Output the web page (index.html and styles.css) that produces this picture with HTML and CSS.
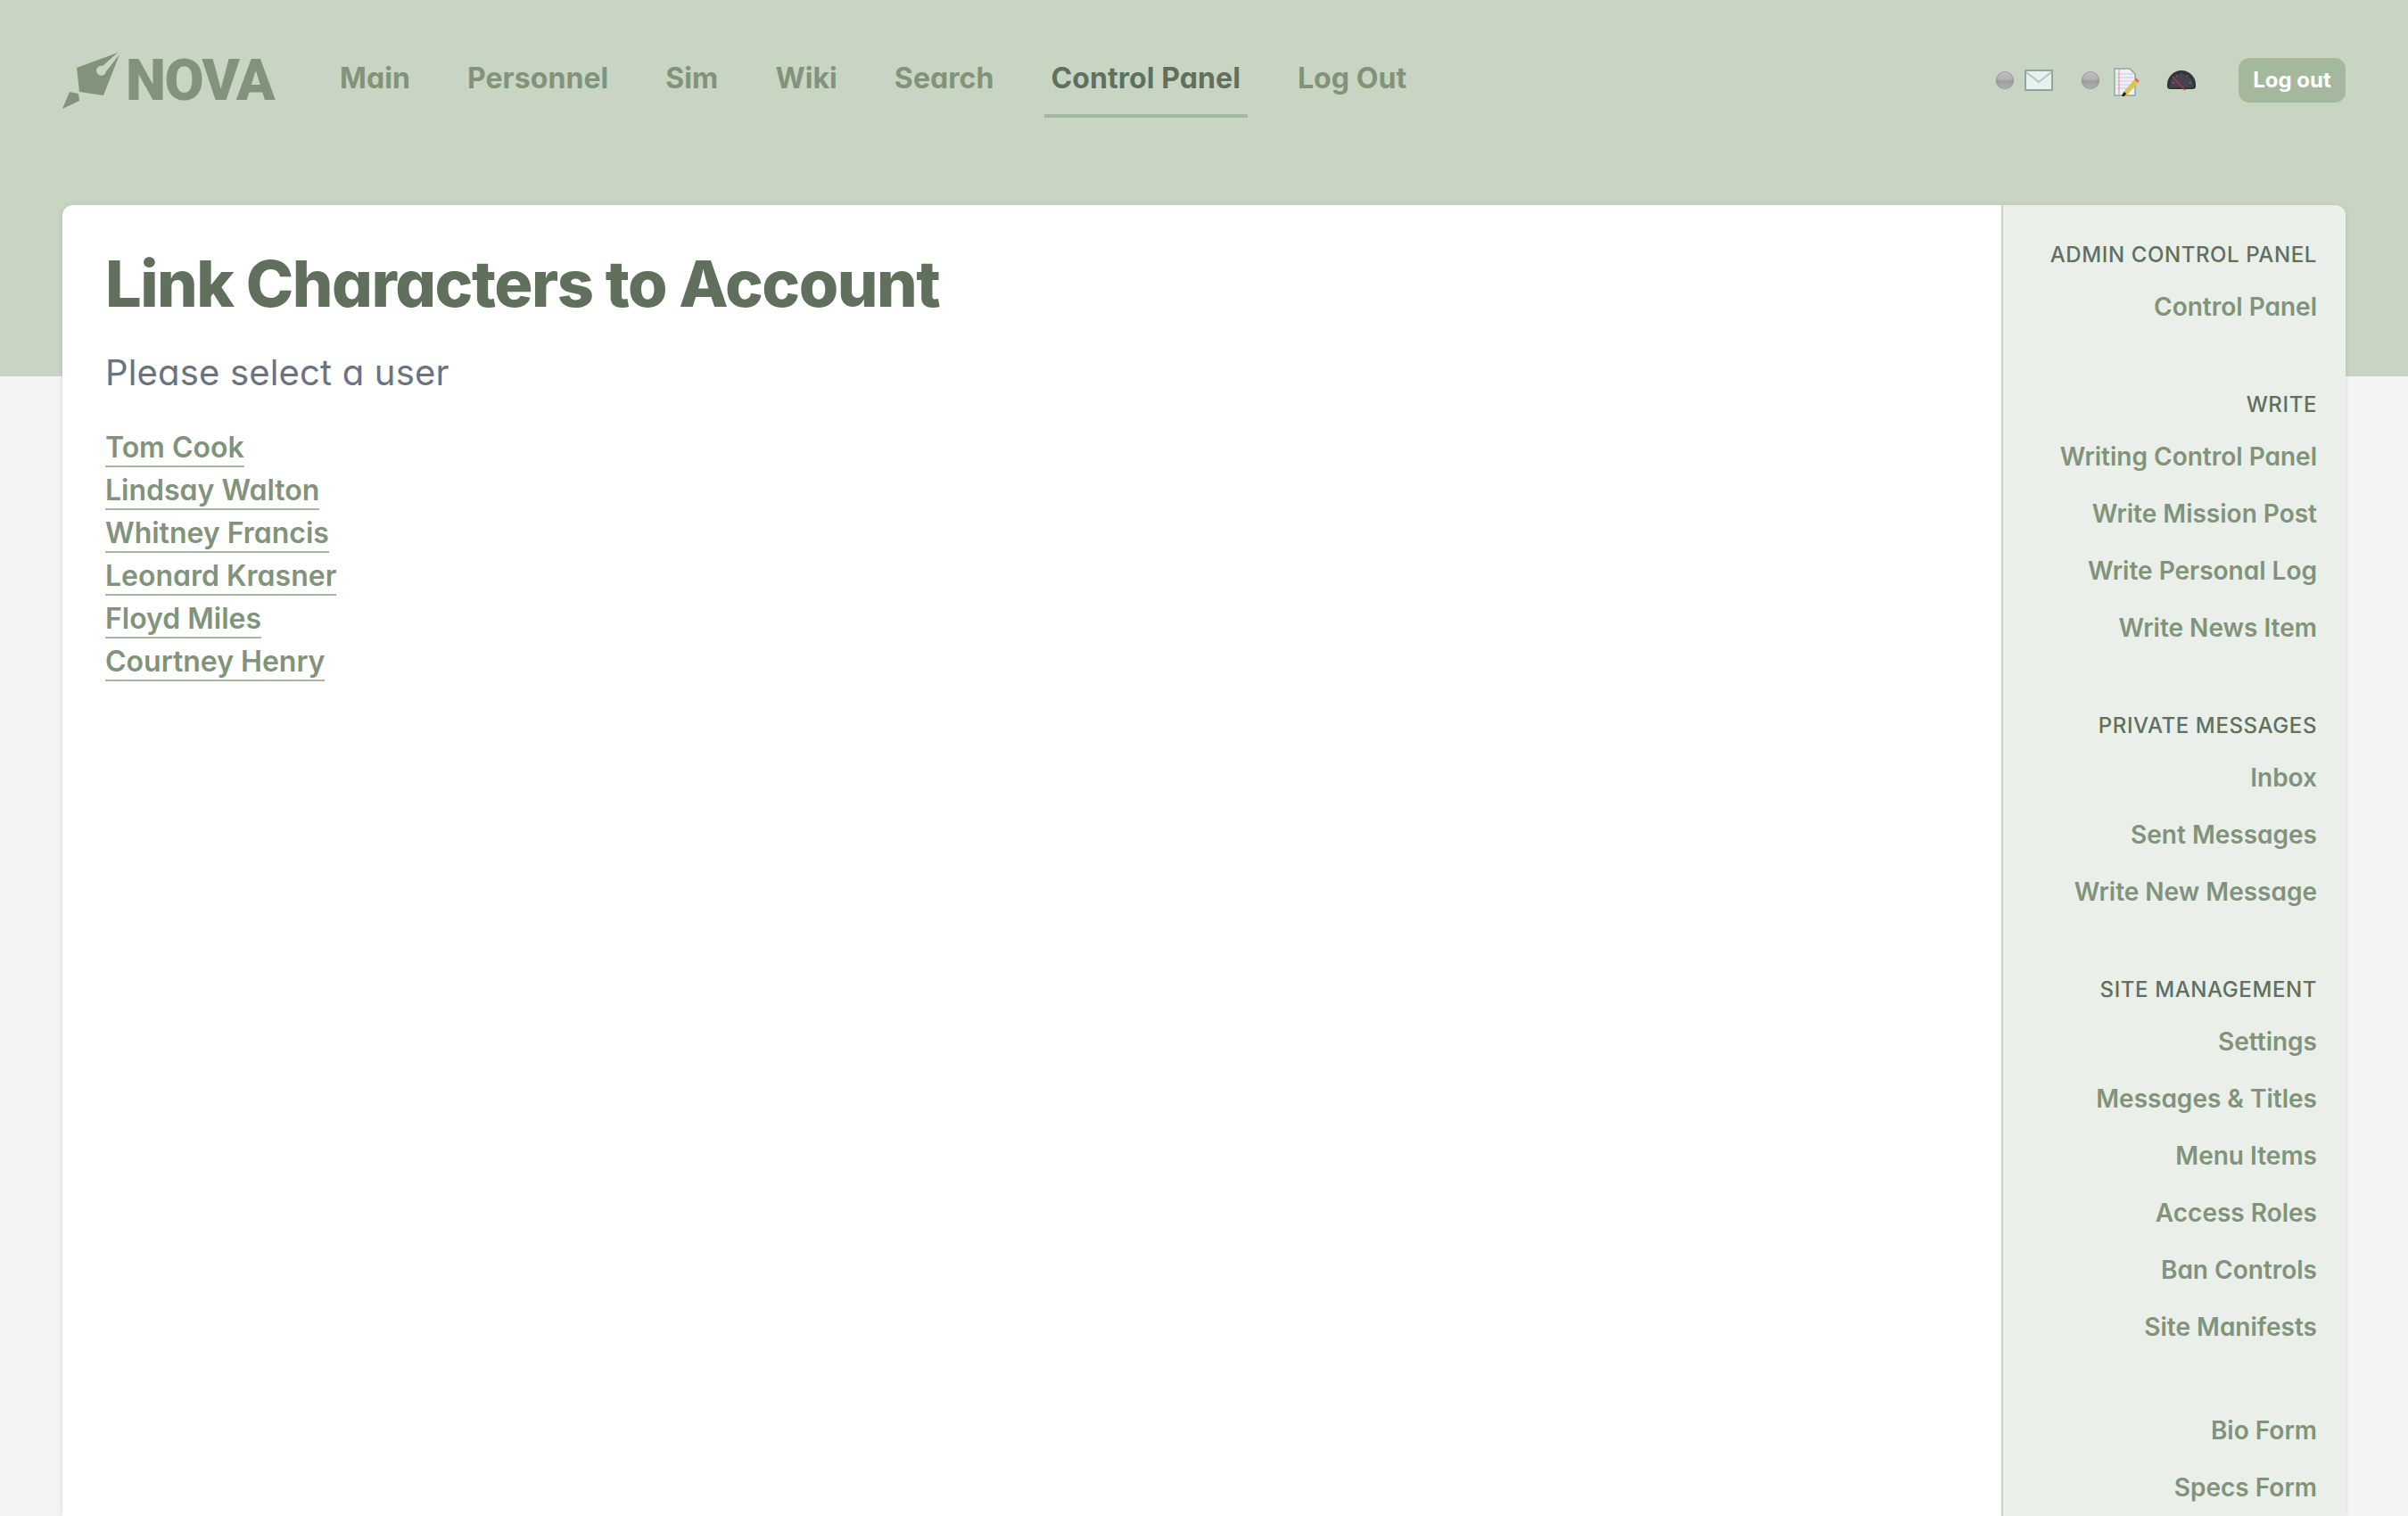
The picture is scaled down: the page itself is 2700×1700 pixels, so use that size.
FILE: index.html
```html
<!DOCTYPE html>
<html lang="en">
<head>
<meta charset="utf-8">
<title>Link Characters to Account</title>
<link rel="stylesheet" href="styles.css">
</head>
<body>
<div class="band"></div>
<div class="page">
  <header class="topbar">
    <a class="logo" href="#">
      <svg class="logo-mark" viewBox="0 0 64 64" width="64" height="64" aria-hidden="true">
        <path fill="#81937a" d="M16 18 62 1 45 16A5.5 5.5 0 1 0 49 22L64 3 46 49 19 45ZM8 45 18 47 19 55 0 64Z"/>
      </svg>
      <span class="logo-word">NOVA</span>
    </a>
    <nav class="nav">
      <a href="#">Main</a>
      <a href="#">Personnel</a>
      <a href="#">Sim</a>
      <a href="#">Wiki</a>
      <a href="#">Search</a>
      <a href="#" class="active">Control Panel</a>
      <a href="#">Log Out</a>
    </nav>
    <div class="tools">
      <span class="dot"></span>
      <svg class="ico-mail" width="32" height="24" viewBox="0 0 32 24" aria-hidden="true">
        <rect x="1" y="1" width="30" height="22" fill="#e6f2ef" stroke="#8fa89e" stroke-width="2"/>
        <path d="M2 3 16 14 30 3" fill="none" stroke="#b4c5bf" stroke-width="2"/>
      </svg>
      <span class="dot dot-second"></span>
      <svg class="ico-note" width="32" height="32" viewBox="0 0 32 32" aria-hidden="true">
        <path d="M3 1H20L26 7V31H3Z" fill="#eef1f7" stroke="#8fa89e" stroke-width="1.5"/>
        <path d="M5 7H24M5 11H24M5 15H24M5 19H24M5 23H24" stroke="#c3cbe6" stroke-width="1"/>
        <path d="M8 2V30" stroke="#eba9a0" stroke-width="1.5"/>
        <path d="M14 30 28 14" stroke="#e2c24a" stroke-width="5"/>
        <path d="M27 15 29 13" stroke="#e0695a" stroke-width="5"/>
        <path d="M12 32 15 28" stroke="#222" stroke-width="3"/>
      </svg>
      <svg class="ico-gauge" width="32" height="24" viewBox="0 0 32 24" aria-hidden="true">
        <path d="M0 17A16 16 0 0 1 32 17V19Q32 22 28 22H4Q0 22 0 19Z" fill="#33333a"/>
        <path d="M3 18A13 13 0 0 1 29 18V20H3Z" fill="#45434f"/>
        <path d="M6 15H8M10 7H11M16 4V5M22 7H23M25 15H27" stroke="#74747c" stroke-width="1.5"/>
        <path d="M6 8 20 23" stroke="#a83c3b" stroke-width="1.5"/>
      </svg>
      <a href="#" class="logout">Log out</a>
    </div>
  </header>
  <main class="card">
    <section class="content">
      <h1>Link Characters to Account</h1>
      <p class="lead">Please select a user</p>
      <ul class="users">
        <li><a href="#">Tom Cook</a></li>
        <li><a href="#">Lindsay Walton</a></li>
        <li><a href="#">Whitney Francis</a></li>
        <li><a href="#">Leonard Krasner</a></li>
        <li><a href="#">Floyd Miles</a></li>
        <li><a href="#">Courtney Henry</a></li>
      </ul>
    </section>
    <aside class="side">
      <div class="group">
        <h2>Admin Control Panel</h2>
        <a href="#">Control Panel</a>
      </div>
      <div class="group">
        <h2>Write</h2>
        <a href="#">Writing Control Panel</a>
        <a href="#">Write Mission Post</a>
        <a href="#">Write Personal Log</a>
        <a href="#">Write News Item</a>
      </div>
      <div class="group">
        <h2>Private Messages</h2>
        <a href="#">Inbox</a>
        <a href="#">Sent Messages</a>
        <a href="#">Write New Message</a>
      </div>
      <div class="group">
        <h2>Site Management</h2>
        <a href="#">Settings</a>
        <a href="#">Messages &amp; Titles</a>
        <a href="#">Menu Items</a>
        <a href="#">Access Roles</a>
        <a href="#">Ban Controls</a>
        <a href="#">Site Manifests</a>
      </div>
      <div class="group group-plain">
        <a href="#">Bio Form</a>
        <a href="#">Specs Form</a>
      </div>
    </aside>
  </main>
</div>
</body>
</html>
```
FILE: styles.css
```css
* { box-sizing: border-box; }
html, body { margin: 0; height: 1700px; overflow: hidden; }
body { background: #f3f4f6; font-family: Inter, "Liberation Sans", sans-serif; font-feature-settings: "cv11"; position: relative; }
a { text-decoration: none; color: inherit; }
.band { position: absolute; top: 0; left: 0; right: 0; height: 422px; background: #c9d5c3; }
.page { position: relative; padding: 0 70px; height: 1700px; display: flex; flex-direction: column; }
.topbar { height: 230px; display: flex; align-items: flex-start; }
.logo { display: flex; align-items: flex-start; width: 311px; padding-top: 58px; flex: none; }
.logo-mark { flex: none; }
.logo-word { font-family: Roboto, sans-serif; font-weight: 900; font-size: 64px; line-height: 64px; color: #81937a; margin: 1px 0 0 7px; letter-spacing: -1.5px; }
.nav { display: flex; gap: 64px; padding-top: 64px; }
.nav a { font-size: 32px; line-height: 48px; font-weight: 700; letter-spacing: .08px; color: #81937a; padding: 0 8px 16px; border-bottom: 4px solid transparent; margin: 0 -8px; }
.nav a.active { color: #60705c; border-bottom-color: #a3b89d; }
.tools { margin-left: auto; display: flex; align-items: center; height: 50px; margin-top: 65px; }
.dot { width: 20px; height: 20px; border-radius: 50%; background: linear-gradient(#c2c2c2, #b2b2b2 45%, #9c9c9c 55%, #b6b6b6); box-shadow: inset 0 0 2px #707070; flex: none; }
.dot-second { margin-left: 32px; }
.ico-mail { margin-left: 12px; }
.ico-note { margin-left: 14px; margin-top: 4px; }
.ico-gauge { margin-left: 30px; }
.logout { margin-left: 48px; width: 120px; text-align: center; background: #a3b89d; color: #fff; font-size: 24px; font-weight: 700; line-height: 50px; height: 50px; border-radius: 12px; }
.card { flex: 1; display: flex; background: #fff; border-radius: 12px 12px 0 0; box-shadow: 0 1px 6px rgba(60, 70, 60, .14); overflow: hidden; min-height: 0; }
.content { flex: 1; padding: 48px; }
h1 { margin: 0; font-size: 72px; line-height: 80px; font-weight: 800; letter-spacing: -1.5px; color: #60705c; }
.lead { margin: 30px 0 0; font-size: 40px; line-height: 60px; letter-spacing: .17px; color: #6b7280; }
.users { list-style: none; margin: 30px 0 0; padding: 0; }
.users li { height: 48px; font-size: 32px; line-height: 48px; }
.users a { color: #81937a; font-weight: 600; border-bottom: 2px solid #a3b89d; padding-bottom: 1px; }
.side { width: 386px; flex: none; background: #eaefea; border-left: 2px solid #c9d5c3; padding: 38px 32px 0 0; text-align: right; }
.group { margin-bottom: 60px; }
.group-plain { margin-top: -8px; }
.group h2 { margin: 0 0 8px; font-size: 24px; line-height: 36px; font-weight: 500; color: #60705c; text-transform: uppercase; letter-spacing: .6px; }
.group a { display: block; font-size: 28px; line-height: 64px; font-weight: 600; color: #81937a; }
```
